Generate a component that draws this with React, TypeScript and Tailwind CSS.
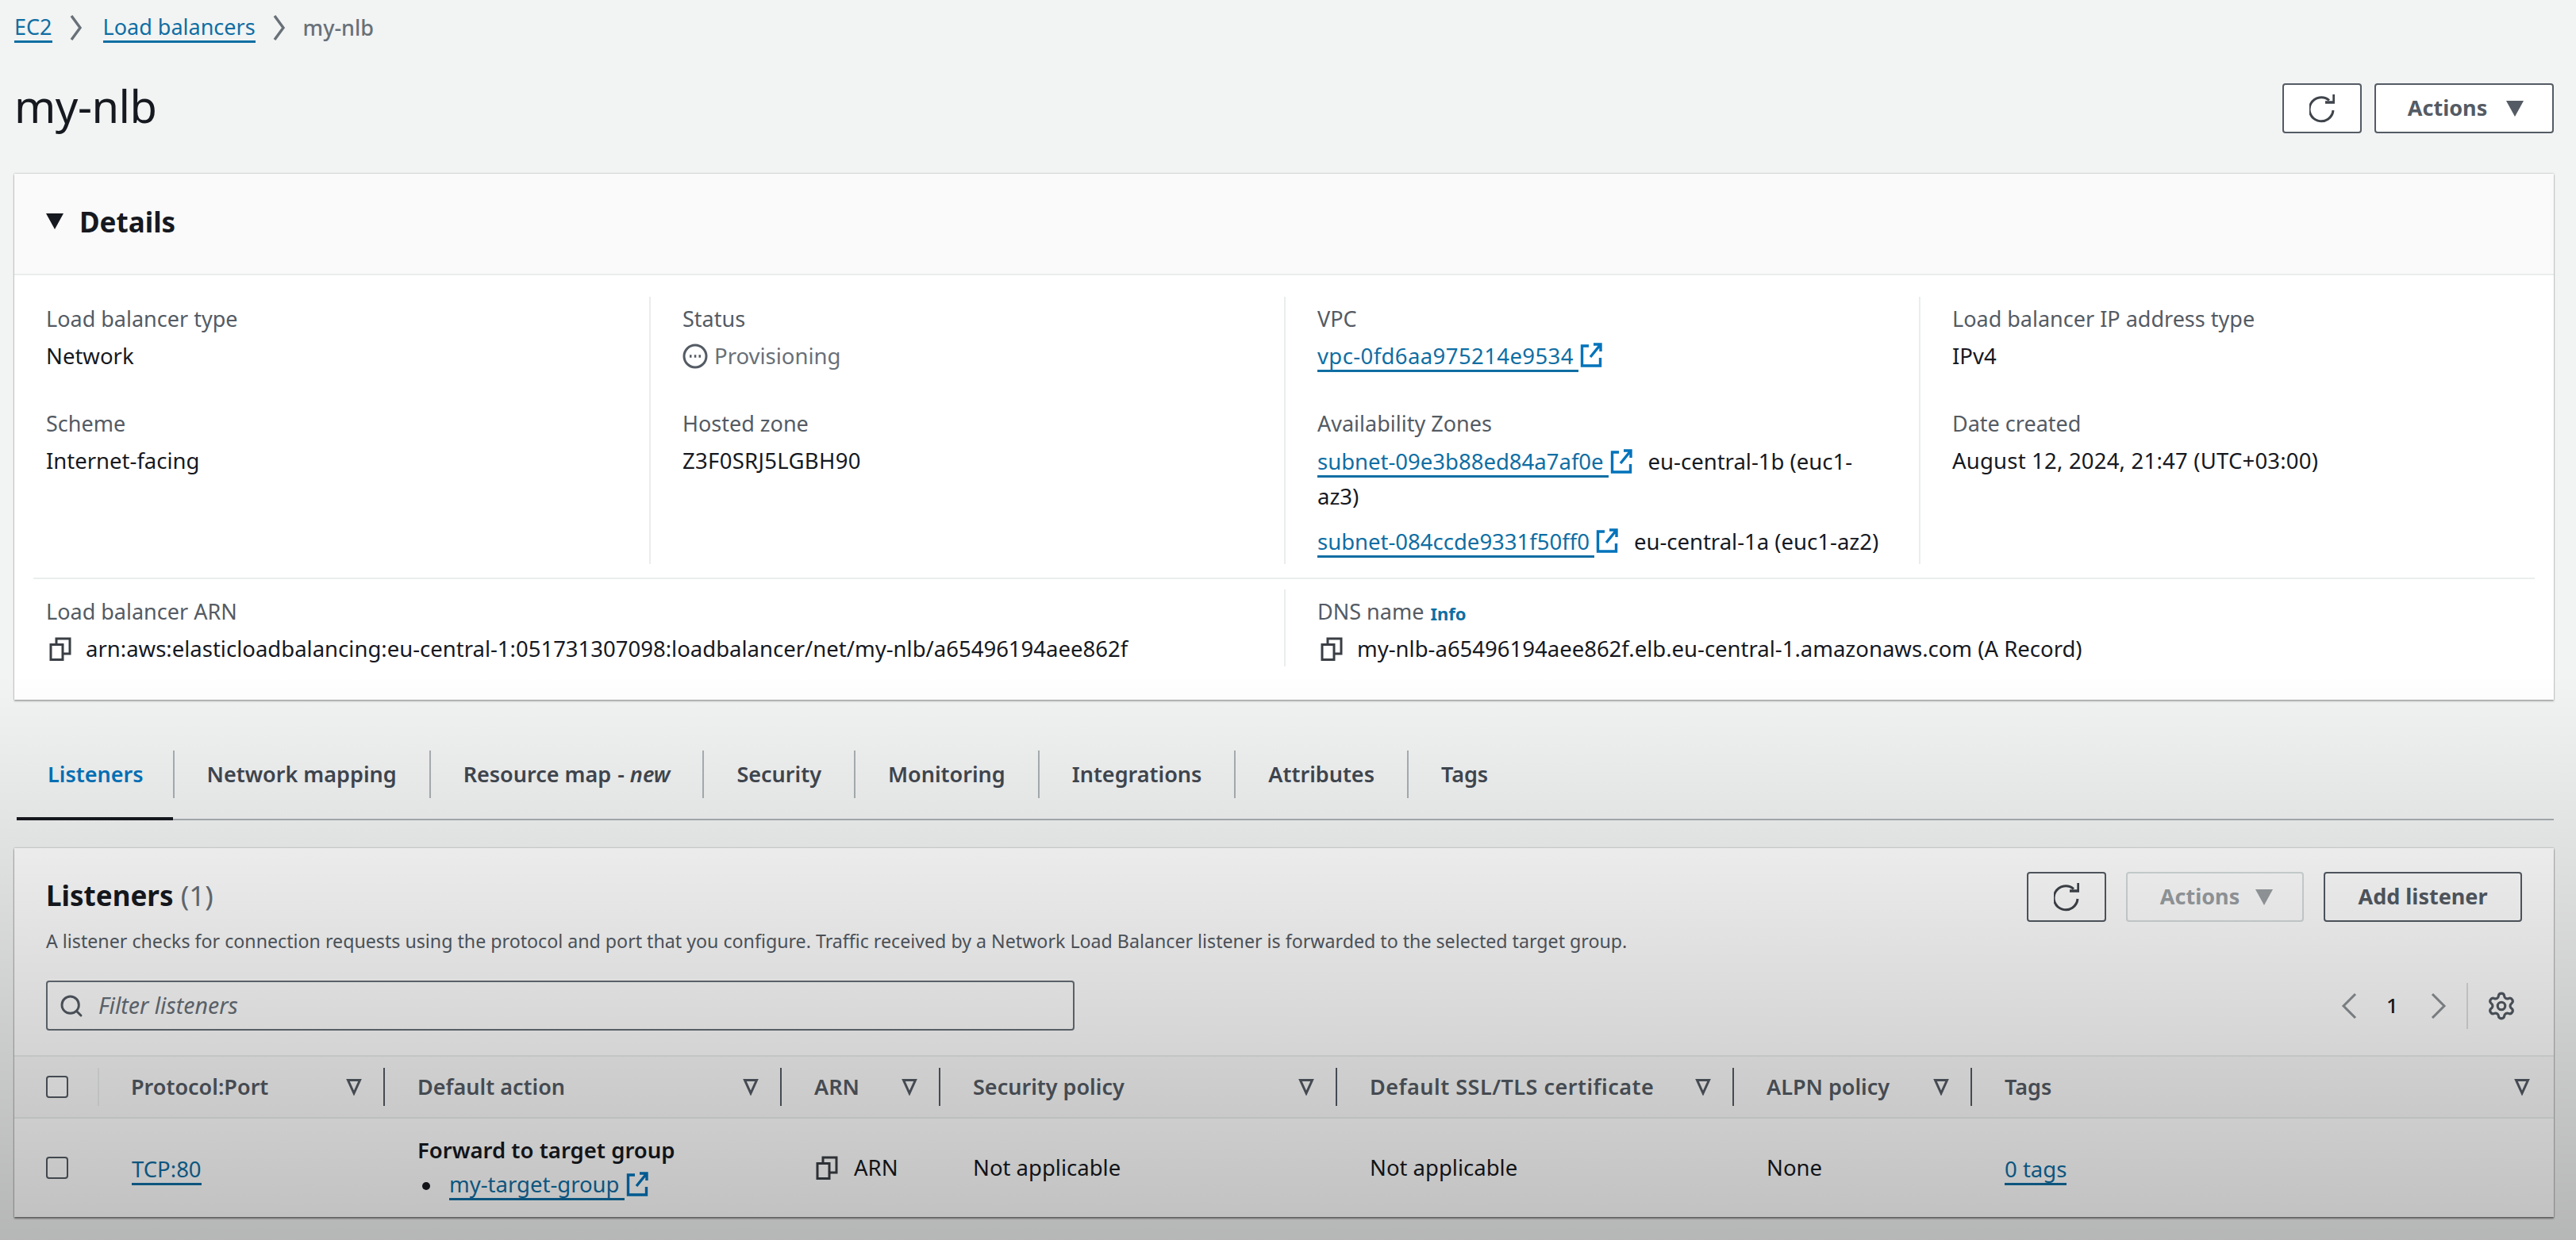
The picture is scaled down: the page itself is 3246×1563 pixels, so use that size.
import { ReactNode } from 'react';
import { Search, Settings } from 'lucide-react';

const External = ({ className = '' }: { className?: string }) => (
    <svg viewBox="0 0 28 32" className={`w-[28px] h-[32px] shrink-0 text-[#0073bb] ${className}`} fill="none" stroke="currentColor" strokeWidth="3.4">
        <path d="M11 5H2.5v25h23V20" />
        <path d="M17 3h9v9M26 3 13 19" />
    </svg>
);

const Copy = ({ className = '' }: { className?: string }) => (
    <svg viewBox="0 0 28 30" className={`w-[28px] h-[30px] shrink-0 text-[#3a3f45] ${className}`} fill="none" stroke="currentColor" strokeWidth="3">
        <path d="M2 9.5h15v19H2z" />
        <path d="M9 9V2h17v19h-9" />
    </svg>
);

const Refresh = () => (
    <svg viewBox="0 0 32 38" className="w-[32px] h-[38px] text-[#3f444b]" fill="none" stroke="currentColor" strokeWidth="3">
        <path d="M25 8.5A15 15 0 1 0 30 21" />
        <path d="M31 1v10H20" strokeWidth="3.4" />
    </svg>
);

const Caret = ({ className = 'text-[#545b64]' }: { className?: string }) => (
    <svg viewBox="0 0 22 20" className={`w-[22px] h-[20px] ${className}`} fill="currentColor">
        <path d="M0 0h22L11 20z" />
    </svg>
);

const SortIcon = () => (
    <svg viewBox="0 0 20 22" className="w-[20px] h-[22px] text-[#545b64] shrink-0" fill="none" stroke="currentColor" strokeWidth="3">
        <path d="M2.5 2.5h15L10 19z" />
    </svg>
);

const Chevron = ({ left = false }: { left?: boolean }) => (
    <svg viewBox="0 0 20 32" className="w-[20px] h-[32px] text-[#8d9296]" fill="none" stroke="currentColor" strokeWidth="3">
        <path d={left ? 'M18 1 3 16l15 15' : 'M2 1l15 15L2 31'} />
    </svg>
);

const Crumb = () => (
    <svg viewBox="0 0 16 34" className="w-[16px] h-[34px] text-[#687078]" fill="none" stroke="currentColor" strokeWidth="3.4">
        <path d="M2 2l11 15L2 32" />
    </svg>
);

const Link = ({ children, className = '' }: { children: ReactNode; className?: string }) => (
    <a className={`text-[#0f6ea3] border-b-[3px] border-[#0f6ea3] leading-[34px] inline-block ${className}`}>{children}</a>
);

const Btn = ({ children, className = '', disabled = false }: { children: ReactNode; className?: string; disabled?: boolean }) => (
    <button className={`h-[63px] rounded-[4px] border-2 flex items-center justify-center font-bold text-[27px] ${disabled ? 'border-[#d5dbdb] text-[#9ba0a4]' : 'border-[#545b64] text-[#545b64] bg-white'} ${className}`}>
        {children}
    </button>
);

const Field = ({ label, children, info = false }: { label: string; children: ReactNode; info?: boolean }) => (
    <div className="mb-[41px] last:mb-0">
        <div className="h-[44px] flex items-center text-[#545b64] text-[27px]">
            {label}
            {info && <span className="text-[#0f6ea3] font-bold text-[22px] ml-[8px] mt-[4px]">Info</span>}
        </div>
        <div className="mt-[3px] min-h-[44px] leading-[44px] text-[#16191f]">{children}</div>
    </div>
);

const tabs = ['Listeners', 'Network mapping', 'Resource map', 'Security', 'Monitoring', 'Integrations', 'Attributes', 'Tags'];

const columns = [
    { name: 'Protocol:Port', cls: 'w-[360px]' },
    { name: 'Default action', cls: 'w-[500px]' },
    { name: 'ARN', cls: 'w-[200px]' },
    { name: 'Security policy', cls: 'w-[500px]' },
    { name: 'Default SSL/TLS certificate', cls: 'w-[500px]' },
    { name: 'ALPN policy', cls: 'w-[300px]' },
    { name: 'Tags', cls: 'flex-1' },
];

export default function App() {
    return (
        <div className="relative h-[1563px] overflow-hidden bg-[#f2f3f3] px-[18px] pr-[28px] text-[27.5px] text-[#16191f]" style={{ fontFamily: '"Noto Sans", sans-serif' }}>
            {/* breadcrumbs */}
            <div className="h-[70px] flex items-center text-[27px]">
                <Link>EC2</Link>
                <span className="ml-[22px] mr-[26px]"><Crumb /></span>
                <Link>Load balancers</Link>
                <span className="mx-[22px]"><Crumb /></span>
                <span className="text-[#687078] font-medium">my-nlb</span>
            </div>

            <div className="h-[149px] flex items-start justify-between">
                <h1 className="text-[56px] leading-[70px] mt-[28px] tracking-[-0.5px]">my-nlb</h1>
                <div className="flex gap-[16px] mt-[35px]">
                    <Btn className="w-[100px]"><Refresh /></Btn>
                    <Btn className="w-[226px] gap-[24px] pl-[4px]">Actions <Caret /></Btn>
                </div>
            </div>

            {/* details */}
            <section className="h-[663px] bg-white shadow-[0_0_2px_rgba(0,0,0,0.35),0_2px_2px_rgba(0,0,0,0.25)]">
                <div className="h-[128px] bg-[#fafafa] border-b-2 border-[#eaeded] flex items-center pl-[40px] pb-[3px]">
                    <Caret className="text-[#16191f] mr-[20px] mb-[4px]" />
                    <h2 className="text-[35px] font-bold">Details</h2>
                </div>
                <div className="grid grid-cols-4 pt-[27px]">
                    <div className="pl-[40px] pt-[6px] h-[337px]">
                        <Field label="Load balancer type">Network</Field>
                        <Field label="Scheme">Internet-facing</Field>
                    </div>
                    <div className="pl-[40px] pt-[6px] h-[337px] border-l-2 border-[#eaeded]">
                        <Field label="Status">
                            <span className="flex items-center gap-[8px] text-[#687078]">
                                <svg viewBox="0 0 32 32" className="w-[32px] h-[32px] text-[#545b64]" fill="none" stroke="currentColor" strokeWidth="3">
                                    <circle cx="16" cy="16" r="14" />
                                    <path d="M9 16h2.5M14.8 16h2.5M20.5 16H23" strokeWidth="3.5" />
                                </svg>
                                Provisioning
                            </span>
                        </Field>
                        <Field label="Hosted zone"><span className="tracking-[0.3px]">Z3F0SRJ5LGBH90</span></Field>
                    </div>
                    <div className="pl-[40px] pr-[56px] pt-[6px] h-[337px] border-l-2 border-[#eaeded]">
                        <Field label="VPC">
                            <span className="flex items-center gap-[2px] pt-[4px]"><Link className="pr-[6px] tracking-[0.4px]">vpc-0fd6aa975214e9534</Link><External className="mb-[6px]" /></span>
                        </Field>
                        <div>
                            <div className="h-[44px] flex items-center text-[#545b64] text-[27px]">Availability Zones</div>
                            <div className="mt-[5px] leading-[42px]">
                                <Link className="pr-[6px]">subnet-09e3b88ed84a7af0e</Link>
                                <External className="inline-block mx-[2px] mb-[8px]" />
                                <span className="ml-[18px]">eu-central-1b (euc1-az3)</span>
                            </div>
                            <div className="mt-[15px] leading-[42px] whitespace-nowrap">
                                <Link className="pr-[6px]">subnet-084ccde9331f50ff0</Link>
                                <External className="inline-block mx-[2px] mb-[8px]" />
                                <span className="ml-[18px]">eu-central-1a (euc1-az2)</span>
                            </div>
                        </div>
                    </div>
                    <div className="pl-[40px] pt-[6px] h-[337px] border-l-2 border-[#eaeded]">
                        <Field label="Load balancer IP address type">IPv4</Field>
                        <Field label="Date created"><span className="tracking-[0.2px]">August 12, 2024, 21:47 (UTC+03:00)</span></Field>
                    </div>
                </div>
                <div className="mt-[17px] mx-[24px] border-t-2 border-[#eaeded]" />
                <div className="grid grid-cols-2 mt-[13px]">
                    <div className="pl-[40px] pt-[6px] h-[97px]">
                        <Field label="Load balancer ARN">
                            <span className="flex items-center gap-[18px] ml-[4px]"><Copy />arn:aws:elasticloadbalancing:eu-central-1:051731307098:loadbalancer/net/my-nlb/a65496194aee862f</span>
                        </Field>
                    </div>
                    <div className="pl-[40px] pt-[6px] h-[97px] border-l-2 border-[#eaeded]">
                        <Field label="DNS name" info>
                            <span className="flex items-center gap-[18px] ml-[4px]"><Copy />my-nlb-a65496194aee862f.elb.eu-central-1.amazonaws.com (A Record)</span>
                        </Field>
                    </div>
                </div>
            </section>

            {/* tabs */}
            <div className="mt-[64px] ml-[3px] h-[88px] flex items-start border-b-2 border-[#aab0b3] relative">
                {tabs.map((tab, i) => (
                    <div key={tab} className={`h-[60px] flex items-center text-[27px] font-semibold whitespace-nowrap ${i === 0 ? 'pl-[39px] pr-[37px] text-[#0073bb]' : 'px-[41px] text-[#414750]'} ${i < tabs.length - 1 ? 'border-r-2 border-[#aab0b3]' : ''}`}>
                        {tab}
                        {tab === 'Resource map' && <span className="ml-[8px]">- <em>new</em></span>}
                    </div>
                ))}
                <div className="absolute left-0 bottom-[-2px] w-[197px] h-[4px] bg-[#16191f]" />
            </div>

            {/* listeners */}
            <section className="mt-[35px] h-[465px] bg-white shadow-[0_0_2px_rgba(0,0,0,0.35),0_2px_2px_rgba(0,0,0,0.45)]">
                <div className="px-[40px] pt-[30px] flex justify-between">
                    <div>
                        <h2 className="text-[35px] font-bold leading-[60px]">Listeners <span className="font-normal text-[#687078]">(1)</span></h2>
                        <p className="text-[23.2px] text-[#545b64] leading-[34px] mt-[10px] whitespace-nowrap">A listener checks for connection requests using the protocol and port that you configure. Traffic received by a Network Load Balancer listener is forwarded to the selected target group.</p>
                    </div>
                    <div className="flex gap-[25px] h-[63px]">
                        <Btn className="w-[100px]"><Refresh /></Btn>
                        <Btn disabled className="w-[224px] gap-[20px] pl-[4px]">Actions <Caret className="text-[#9ba0a4]" /></Btn>
                        <Btn className="w-[250px]">Add listener</Btn>
                    </div>
                </div>
                <div className="mt-[33px] pl-[40px] pr-[47px] h-[63px] flex items-center justify-between">
                    <div className="w-[1296px] h-[63px] rounded-[4px] border-2 border-[#687078] bg-white flex items-center pl-[14px] gap-[18px]">
                        <Search className="w-[32px] h-[32px] text-[#545b64]" strokeWidth={2.2} />
                        <span className="italic text-[28.5px] text-[#687078]">Filter listeners</span>
                    </div>
                    <div className="flex items-center">
                        <Chevron left />
                        <span className="ml-[37px] w-[20px] text-[26px] font-medium">1</span>
                        <span className="ml-[36px]"><Chevron /></span>
                        <div className="ml-[25px] h-[58px] border-l-2 border-[#dcdfe0]" />
                        <Settings className="ml-[23px] w-[38px] h-[38px] text-[#545b64]" strokeWidth={2} />
                    </div>
                </div>
                <div className="mt-[31px] h-[80px] border-y-2 border-[#eaeded] bg-[#fafafa] flex items-center">
                    <div className="w-[107px] pl-[40px] h-[48px] flex items-center border-r-2 border-[#eaeded]">
                        <div className="w-[28px] h-[28px] rounded-[4px] border-2 border-[#545b64] bg-white" />
                    </div>
                    {columns.map((col, i) => (
                        <div key={col.name} className={`${col.cls} h-[48px] pl-[41px] flex items-center justify-between font-semibold text-[27px] text-[#545b64] whitespace-nowrap ${i < columns.length - 1 ? 'pr-[27px] border-r-2 border-[#545b64]' : 'pr-[30px]'} ${i === 0 ? '!pl-[40px]' : ''}`}>
                            <span className={col.name.includes('SSL') ? 'tracking-[0.5px]' : ''}>{col.name}</span>
                            <SortIcon />
                        </div>
                    ))}
                </div>
                <div className="h-[123px] flex items-center">
                    <div className="w-[107px] pl-[40px] flex items-center">
                        <div className="w-[28px] h-[28px] rounded-[4px] border-2 border-[#545b64] bg-white" />
                    </div>
                    <div className="w-[360px] pl-[41px] pt-[4px]"><Link>TCP:80</Link></div>
                    <div className="w-[500px] pl-[41px]">
                        <div className="font-semibold leading-[40px]">Forward to target group</div>
                        <div className="flex items-center leading-[40px] mt-[6px]">
                            <span className="w-[10px] h-[10px] rounded-full bg-[#16191f] ml-[6px] mr-[24px]" />
                            <Link className="pr-[6px]">my-target-group</Link>
                            <External className="ml-[2px] mb-[6px]" />
                        </div>
                    </div>
                    <div className="w-[200px] pl-[43px] flex items-center gap-[20px]"><Copy />ARN</div>
                    <div className="w-[500px] pl-[41px]">Not applicable</div>
                    <div className="w-[500px] pl-[41px]">Not applicable</div>
                    <div className="w-[300px] pl-[41px]">None</div>
                    <div className="flex-1 pl-[41px] pt-[4px]"><Link>0 tags</Link></div>
                </div>
            </section>

            {/* the fade at the bottom of the frame */}
            <div className="absolute left-0 right-0 top-[850px] bottom-0 pointer-events-none bg-linear-to-b from-transparent to-black/25" />
        </div>
    );
}
